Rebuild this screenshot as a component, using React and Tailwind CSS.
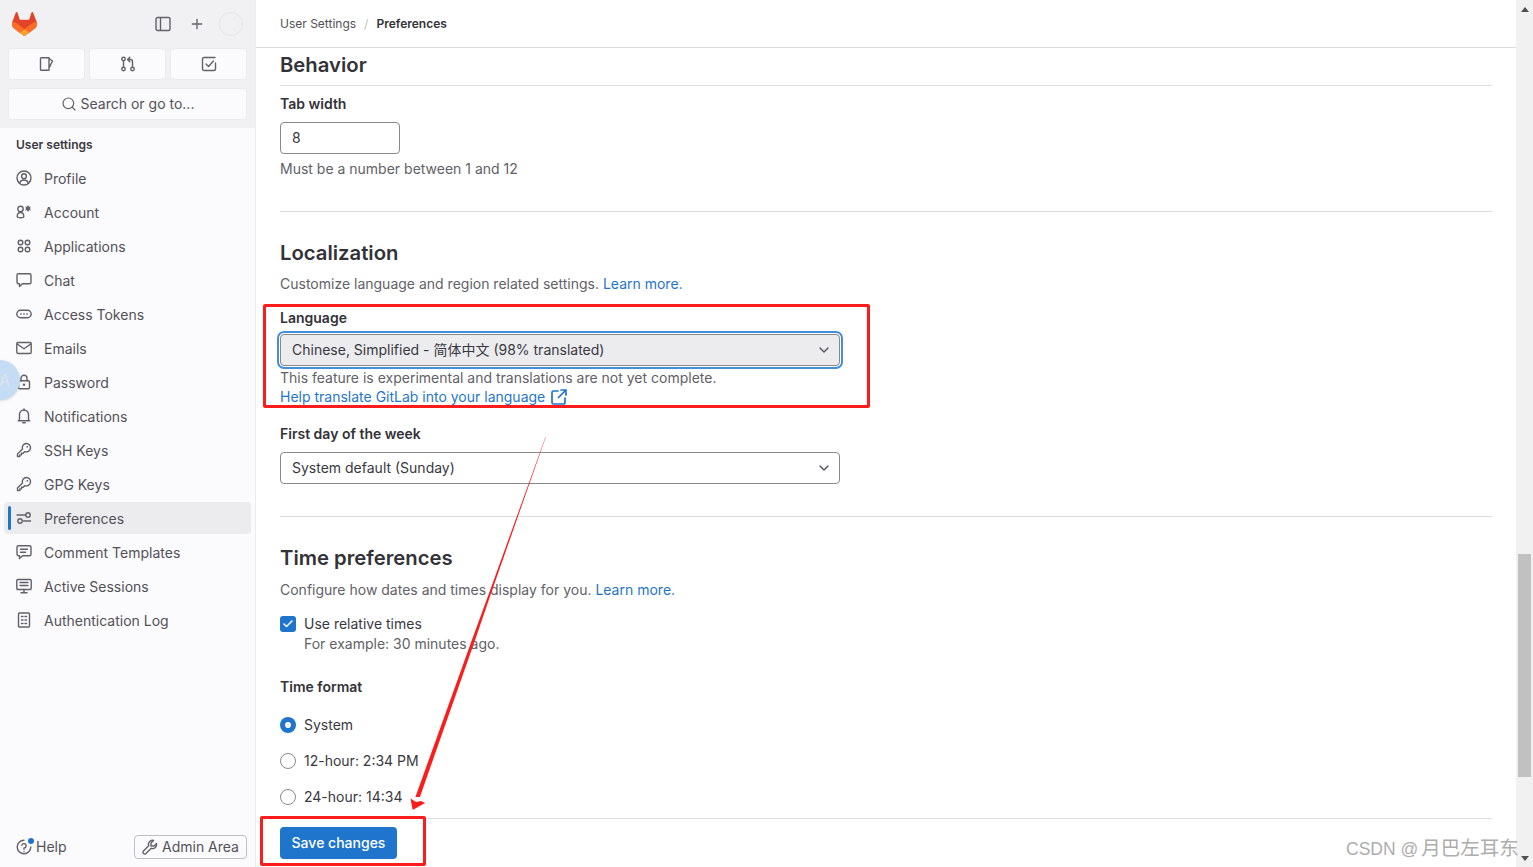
import { Check, ChevronDown, Plus, Search } from "lucide-react";

const fontStack = "font-['Inter','Noto_Sans_CJK_SC',sans-serif]";

function Svg({ children, className = "" }) {
  return (
    <svg
      viewBox="0 0 16 16"
      fill="none"
      stroke="currentColor"
      strokeWidth="1.4"
      strokeLinecap="round"
      strokeLinejoin="round"
      className={`h-4 w-4 shrink-0 ${className}`}
    >
      {children}
    </svg>
  );
}

const icons = {
  profile: (
    <>
      <circle cx="8" cy="8" r="7" />
      <circle cx="8" cy="6.2" r="2.4" />
      <path d="M3.6 13.2c.6-2.2 2.3-3.2 4.4-3.2s3.8 1 4.4 3.2" />
    </>
  ),
  account: (
    <>
      <circle cx="4.5" cy="5" r="2.7" />
      <path d="M1.2 12.5c0-2.3 1.4-4 3.3-4s3.3 1.7 3.3 4c0 1.7-6.6 1.700-6.600 0Z" />
      <circle cx="12" cy="4.500" r="2.200" fill="currentColor" stroke="none" />
      <path d="M12 1.800v5.400M9.700 3.100l4.600 2.800M14.300 3.100l-4.600 2.800" strokeWidth="1" />
    </>
  ),
  apps: (
    <>
      <circle cx="4.500" cy="4.500" r="2.300" />
      <circle cx="11.500" cy="4.500" r="2.300" />
      <circle cx="4.500" cy="11.500" r="2.300" />
      <circle cx="11.500" cy="11.500" r="2.300" />
    </>
  ),
  chat: <path d="M2.500 1.800h11a1.500 1.500 0 0 1 1.500 1.500v7a1.500 1.500 0 0 1-1.500 1.500H6.500L3.500 14.500v-2.700h-1A1.500 1.500 0 0 1 1 10.300v-7a1.500 1.500 0 0 1 1.500-1.500Z" />,
  token: (
    <>
      <rect x="0.800" y="4.300" width="14.400" height="7.400" rx="3.700" />
      <path d="M5 8h.01M8 8h.01M11 8h.01" strokeWidth="1.700" />
    </>
  ),
  mail: (
    <>
      <rect x="0.800" y="2.500" width="14.400" height="11" rx="1.300" />
      <path d="m1.200 4 6.800 4.800L14.800 4" />
    </>
  ),
  lock: (
    <>
      <rect x="2.500" y="6.800" width="11" height="8" rx="1.200" />
      <path d="M5 6.800V4.300a3 3 0 0 1 6 0v2.500" />
      <circle cx="8" cy="10.800" r="1.200" fill="currentColor" stroke="none" />
    </>
  ),
  bell: (
    <>
      <path d="M3.500 11.800V6.500a4.500 4.500 0 0 1 9 0v5.300l1.200 1H2.300l1.200-1Z" />
      <path d="M6.800 14.800h2.400M8 2V1" />
    </>
  ),
  key: (
    <>
      <path d="M10.300 1.500a4.200 4.200 0 1 1-1.500 8.100l-1.600 1.600H5.500v1.700H3.800v1.600H1.500v-2.400l5-5a4.200 4.200 0 0 1 3.800-5.600Z" />
      <path d="M11.300 4.800h.01" strokeWidth="1.800" />
    </>
  ),
  prefs: (
    <>
      <path d="M1 5h8.500M14.500 11H7.500" />
      <circle cx="12" cy="5" r="2.200" />
      <circle cx="4" cy="11" r="2.200" />
    </>
  ),
  comment: (
    <>
      <path d="M2.500 1.800h11a1.500 1.500 0 0 1 1.500 1.500v7a1.500 1.500 0 0 1-1.500 1.500H6.500L3.500 14.500v-2.700h-1A1.500 1.500 0 0 1 1 10.300v-7a1.500 1.500 0 0 1 1.500-1.500Z" />
      <path d="M4.500 5.300h7M4.500 8.300h5" />
    </>
  ),
  session: (
    <>
      <rect x="0.800" y="1.500" width="14.400" height="10" rx="1" />
      <path d="M4 4.500h8M4 7.500h8M8 11.500v3M5 14.700h6" />
    </>
  ),
  log: (
    <>
      <rect x="2.500" y="1" width="11" height="14" rx="1" />
      <path d="M5.500 4.500h1.500M9 4.500h1.500M5.500 8h1.500M9 8h1.500M5.500 11.500h1.500M9 11.500h1.500" />
    </>
  ),
};

const navItems = [
  ["Profile", "profile"],
  ["Account", "account"],
  ["Applications", "apps"],
  ["Chat", "chat"],
  ["Access Tokens", "token"],
  ["Emails", "mail"],
  ["Password", "lock"],
  ["Notifications", "bell"],
  ["SSH Keys", "key"],
  ["GPG Keys", "key"],
  ["Preferences", "prefs", true],
  ["Comment Templates", "comment"],
  ["Active Sessions", "session"],
  ["Authentication Log", "log"],
];

function Logo() {
  return (
    <svg viewBox="0 0 25 24" className="h-6 w-[25px]">
      <path d="m24.507 9.5-.034-.09L21.082.562a.896.896 0 0 0-1.694.091l-2.29 7.01H7.825L5.535.653a.898.898 0 0 0-1.694-.09L.451 9.411.416 9.5a6.297 6.297 0 0 0 2.09 7.278l.012.01.03.022 5.16 3.867 2.56 1.935 1.554 1.176a1.051 1.051 0 0 0 1.268 0l1.555-1.176 2.56-1.935 5.197-3.89.014-.01A6.297 6.297 0 0 0 24.507 9.5Z" fill="#E24329" />
      <path d="m24.507 9.5-.034-.09a11.44 11.44 0 0 0-4.56 2.051l-7.447 5.632 4.742 3.584 5.197-3.89.014-.01A6.297 6.297 0 0 0 24.507 9.5Z" fill="#FC6D26" />
      <path d="m7.707 20.677 2.56 1.935 1.555 1.176a1.051 1.051 0 0 0 1.268 0l1.555-1.176 2.56-1.935-4.743-3.584-4.755 3.584Z" fill="#FCA326" />
      <path d="M5.01 11.461a11.43 11.43 0 0 0-4.56-2.05L.416 9.5a6.297 6.297 0 0 0 2.09 7.278l.012.01.03.022 5.16 3.867 4.745-3.584-7.444-5.632Z" fill="#FC6D26" />
    </svg>
  );
}

function SideTop() {
  return (
    <div className="h-[128px] shrink-0 bg-[#f1f1f4] px-2">
      <div className="flex h-12 items-center">
        <div className="ml-1">
          <Logo />
        </div>
        <div className="ml-auto flex items-center text-[#626168]">
          <Svg>
            <rect x="1" y="1.500" width="14" height="13" rx="1.500" />
            <path d="M5.500 2v12" />
          </Svg>
          <Plus className="ml-[18px] h-4 w-4" strokeWidth={2} />
          <div className="ml-[14px] mr-[4px] h-6 w-6 rounded-full border border-[#e4e4e8]" />
        </div>
      </div>
      <div className="grid grid-cols-3 gap-1">
        {[
          <path key="a" d="M2.500 1.800h7.500v12.400H2.500a1 1 0 0 1-1-1V2.800a1 1 0 0 1 1-1ZM10 2.500l3.500 2.500L10 12" />,
          <g key="b">
            <circle cx="3.500" cy="3" r="1.700" />
            <circle cx="3.500" cy="13" r="1.700" />
            <circle cx="12.500" cy="13" r="1.700" />
            <path d="M3.500 4.700v6.600M12.500 11.300V5.500a2 2 0 0 0-2-2H8M9.800 1.300 7.600 3.500l2.200 2.200" />
          </g>,
          <g key="c">
            <path d="M14.500 7v6a1.500 1.500 0 0 1-1.500 1.500H3A1.500 1.500 0 0 1 1.500 13V3A1.500 1.500 0 0 1 3 1.500h11" />
            <path d="m5 8 2.500 2.500L12.500 5" />
          </g>,
        ].map((glyph, i) => (
          <div
            key={i}
            className="flex h-8 items-center justify-center rounded-[4px] border border-[#ececef] bg-[#fbfafd] text-[#626168]"
          >
            <Svg>{glyph}</Svg>
          </div>
        ))}
      </div>
      <div className="mt-2 flex h-8 items-center justify-center gap-1 rounded-[4px] border border-[#ececef] bg-[#fbfafd] text-sm text-[#535158]">
        <Search className="h-4 w-4 text-[#626168]" strokeWidth={1.8} />
        Search or go to...
      </div>
    </div>
  );
}

function Sidebar() {
  return (
    <aside className="relative flex h-full w-[256px] shrink-0 flex-col overflow-hidden border-r border-[#ececef] bg-[#fbfafd]">
      <SideTop />
      <div className="flex min-h-0 flex-1 flex-col">
        <p className="mt-[9px] px-4 text-xs font-semibold leading-4 text-[#3a383f]">User settings</p>
        <nav className="mt-[9px] flex flex-col gap-[2px] px-1">
          {navItems.map(([label, icon, active]) => (
            <div
              key={label}
              className={`relative flex h-8 items-center gap-3 rounded-[4px] pl-3 text-sm text-[#535158] ${
                active ? "bg-[#ececef]" : ""
              }`}
            >
              {active && <span className="absolute left-[4px] top-1 h-6 w-[3px] rounded-sm bg-[#1f75cb]" />}
              <Svg className="text-[#626168]">{icons[icon]}</Svg>
              <span className="pt-[2px]">{label}</span>
            </div>
          ))}
        </nav>
      </div>
      <div className="flex h-[40px] shrink-0 items-start justify-between pl-4 pr-2 pt-2">
        <div className="flex h-6 items-center gap-1 text-sm text-[#535158]">
          <span className="relative text-[#626168]">
            <Svg>
              <path d="M14.800 8A6.800 6.800 0 1 1 8 1.200" />
              <path d="M5.800 6.200A2.200 2.200 0 1 1 8 9v1.200M8 12.500h.01" />
            </Svg>
            <span className="absolute -right-[2px] -top-[1px] h-[6px] w-[6px] rounded-full bg-[#1f75cb]" />
          </span>
          Help
        </div>
        <div className="flex h-6 w-[113px] items-center justify-center gap-1 rounded-[4px] border border-[#bfbfc3] text-sm text-[#535158]">
          <Svg className="text-[#626168]">
            <path d="M14.500 4.500a4 4 0 0 1-5.300 4.800L4 14.500a1.700 1.700 0 0 1-2.500-2.500l5.200-5.200a4 4 0 0 1 4.800-5.300L9 4v3h3l2.500-2.500Z" />
          </Svg>
          Admin Area
        </div>
      </div>
      {/* floating translate bubble */}
      <div className="absolute left-[-20px] top-[360px] flex h-10 w-10 items-center justify-end rounded-full bg-[#c4dcf4] pr-[10px] text-base text-[#dde4ec] shadow-sm">
        A
      </div>
    </aside>
  );
}

function Heading({ children }) {
  return <h2 className="text-[20.3px] font-semibold leading-6 text-[#333238]">{children}</h2>;
}

function Label({ children }) {
  return <p className="text-sm font-semibold leading-5 text-[#333238]">{children}</p>;
}

function Muted({ children, className = "" }) {
  return <p className={`text-sm leading-5 text-[#626168] ${className}`}>{children}</p>;
}

function Rule({ className = "" }) {
  return <div className={`h-px bg-[#dcdcde] ${className}`} />;
}

function Link({ children }) {
  return <a className="text-[#1f75cb]">{children}</a>;
}

function Select({ value, focused }) {
  return (
    <div
      className={`flex h-8 w-[560px] items-center justify-between rounded-[4px] border border-[#89888d] pl-[11px] pr-[7px] text-sm text-[#3a383f] ${
        focused ? "bg-[#ececef] shadow-[0_0_0_1px_#fff,0_0_0_3px_#428fdc]" : "bg-white"
      }`}
    >
      <span>{value}</span>
      <ChevronDown className="h-4 w-4 text-[#535158]" strokeWidth={2} />
    </div>
  );
}

function Radio({ label, checked }) {
  return (
    <div className="flex h-5 items-center gap-2 text-sm text-[#3a383f]">
      {checked ? (
        <span className="flex h-4 w-4 items-center justify-center rounded-full bg-[#1f75cb]">
          <span className="h-[6px] w-[6px] rounded-full bg-white" />
        </span>
      ) : (
        <span className="h-4 w-4 rounded-full border border-[#89888d]" />
      )}
      {label}
    </div>
  );
}

function Main() {
  return (
    <main className="flex h-full min-w-0 flex-1 flex-col">
      <header className="flex h-[48px] shrink-0 items-center border-b border-[#dcdcde] px-6 text-xs">
        <span className="text-[#535158]">User Settings</span>
        <span className="mx-2 text-[#bfbfc3]">/</span>
        <span className="font-semibold text-[#333238]">Preferences</span>
      </header>
      <div className="px-6">
        <div className="mt-[5px]">
          <Heading>Behavior</Heading>
        </div>
        <Rule className="mt-[8px]" />
        <div className="mt-2">
          <Label>Tab width</Label>
        </div>
        <div className="mt-2 flex h-8 w-[120px] items-center rounded-[4px] border border-[#89888d] pl-[11px] text-sm text-[#3a383f]">
          8
        </div>
        <Muted className="mt-[5px]">Must be a number between 1 and 12</Muted>
        <Rule className="mt-8" />

        <div className="mt-[29px]">
          <Heading>Localization</Heading>
        </div>
        <Muted className="mt-[9px]">
          Customize language and region related settings. <Link>Learn more.</Link>
        </Muted>
        <div className="mt-[14px]">
          <Label>Language</Label>
        </div>
        <div className="mt-[6px]">
          <Select focused value="Chinese, Simplified - 简体中文 (98% translated)" />
        </div>
        <Muted className="mt-[2px]">This feature is experimental and translations are not yet complete.</Muted>
        <p className="flex h-[18px] items-center gap-[6px] text-sm text-[#1f75cb]">
          Help translate GitLab into your language
          <Svg className="stroke-[1.7]">
            <path d="M7 2H2.500A1.500 1.500 0 0 0 1 3.500v10A1.500 1.500 0 0 0 2.500 15h10a1.500 1.500 0 0 0 1.500-1.500V9" />
            <path d="M10 1h5v5M15 1 7.500 8.500" />
          </Svg>
        </p>
        <div className="mt-[18px]">
          <Label>First day of the week</Label>
        </div>
        <div className="mt-2">
          <Select value="System default (Sunday)" />
        </div>
        <Rule className="mt-8" />

        <div className="mt-[29px]">
          <Heading>Time preferences</Heading>
        </div>
        <Muted className="mt-[10px]">
          Configure how dates and times display for you. <Link>Learn more.</Link>
        </Muted>
        <div className="mt-[14px] flex h-5 items-center gap-2 text-sm text-[#3a383f]">
          <span className="flex h-4 w-4 items-center justify-center rounded-[3px] bg-[#1f75cb]">
            <Check className="h-3 w-3 text-white" strokeWidth={3} />
          </span>
          Use relative times
        </div>
        <Muted className="ml-6">For example: 30 minutes ago.</Muted>
        <div className="mt-[23px]">
          <Label>Time format</Label>
        </div>
        <div className="mt-[18px] flex flex-col gap-4">
          <Radio checked label="System" />
          <Radio label="12-hour: 2:34 PM" />
          <Radio label="24-hour: 14:34" />
        </div>
        <Rule className="mt-[11px]" />
        <button
          type="button"
          className="mt-2 h-8 w-[117px] rounded-[4px] bg-[#1f75cb] text-sm font-medium text-white"
        >
          Save changes
        </button>
      </div>
    </main>
  );
}

function Scrollbar() {
  return (
    <div className="flex h-full w-[17px] shrink-0 flex-col items-center bg-[#f1f1f1]">
      <svg viewBox="0 0 8 5" className="mt-[7px] h-[5px] w-2 fill-[#505050]">
        <path d="M0 5h8L4 0Z" />
      </svg>
      <div className="mt-[542px] h-[223px] w-[13px] bg-[#c1c1c1]" />
      <svg viewBox="0 0 8 5" className="mt-auto mb-[6px] h-[5px] w-2 fill-[#505050]">
        <path d="M0 0h8L4 5Z" />
      </svg>
    </div>
  );
}

// screenshot markup sitting on top of the page
function Annotations() {
  return (
    <>
      <div className="pointer-events-none absolute left-[263px] top-[304px] h-[104px] w-[607px] rounded-[2px] border-[3px] border-[#fb1c1c]" />
      <div className="pointer-events-none absolute left-[260px] top-[816px] h-[50px] w-[166px] rounded-[2px] border-[3px] border-[#fb1c1c]" />
      <svg viewBox="0 0 1533 867" className="pointer-events-none absolute left-0 top-0 h-[867px] w-[1533px]">
        <path d="M545.500 437 490.200 590 471.900 640 415.400 797 419.900 797 475.100 640 492.200 590 545.800 437Z" fill="#fb1c1c" />
        <path d="M412.700 810 410.500 798.500 416 802 421 801 425 803Z" fill="#fb1c1c" />
      </svg>
      <span className="pointer-events-none absolute left-[1346px] top-[836px] font-['Liberation_Sans','Noto_Sans_CJK_SC',sans-serif] text-[17.5px] leading-6 text-[#adadad]">
        CSDN @<span className="ml-[3px] text-[19.5px]">月巴左耳东</span>
      </span>
    </>
  );
}

export default function App() {
  return (
    <div className={`relative flex h-[867px] w-[1533px] overflow-hidden bg-white ${fontStack}`}>
      <Sidebar />
      <Main />
      <Scrollbar />
      <Annotations />
    </div>
  );
}
